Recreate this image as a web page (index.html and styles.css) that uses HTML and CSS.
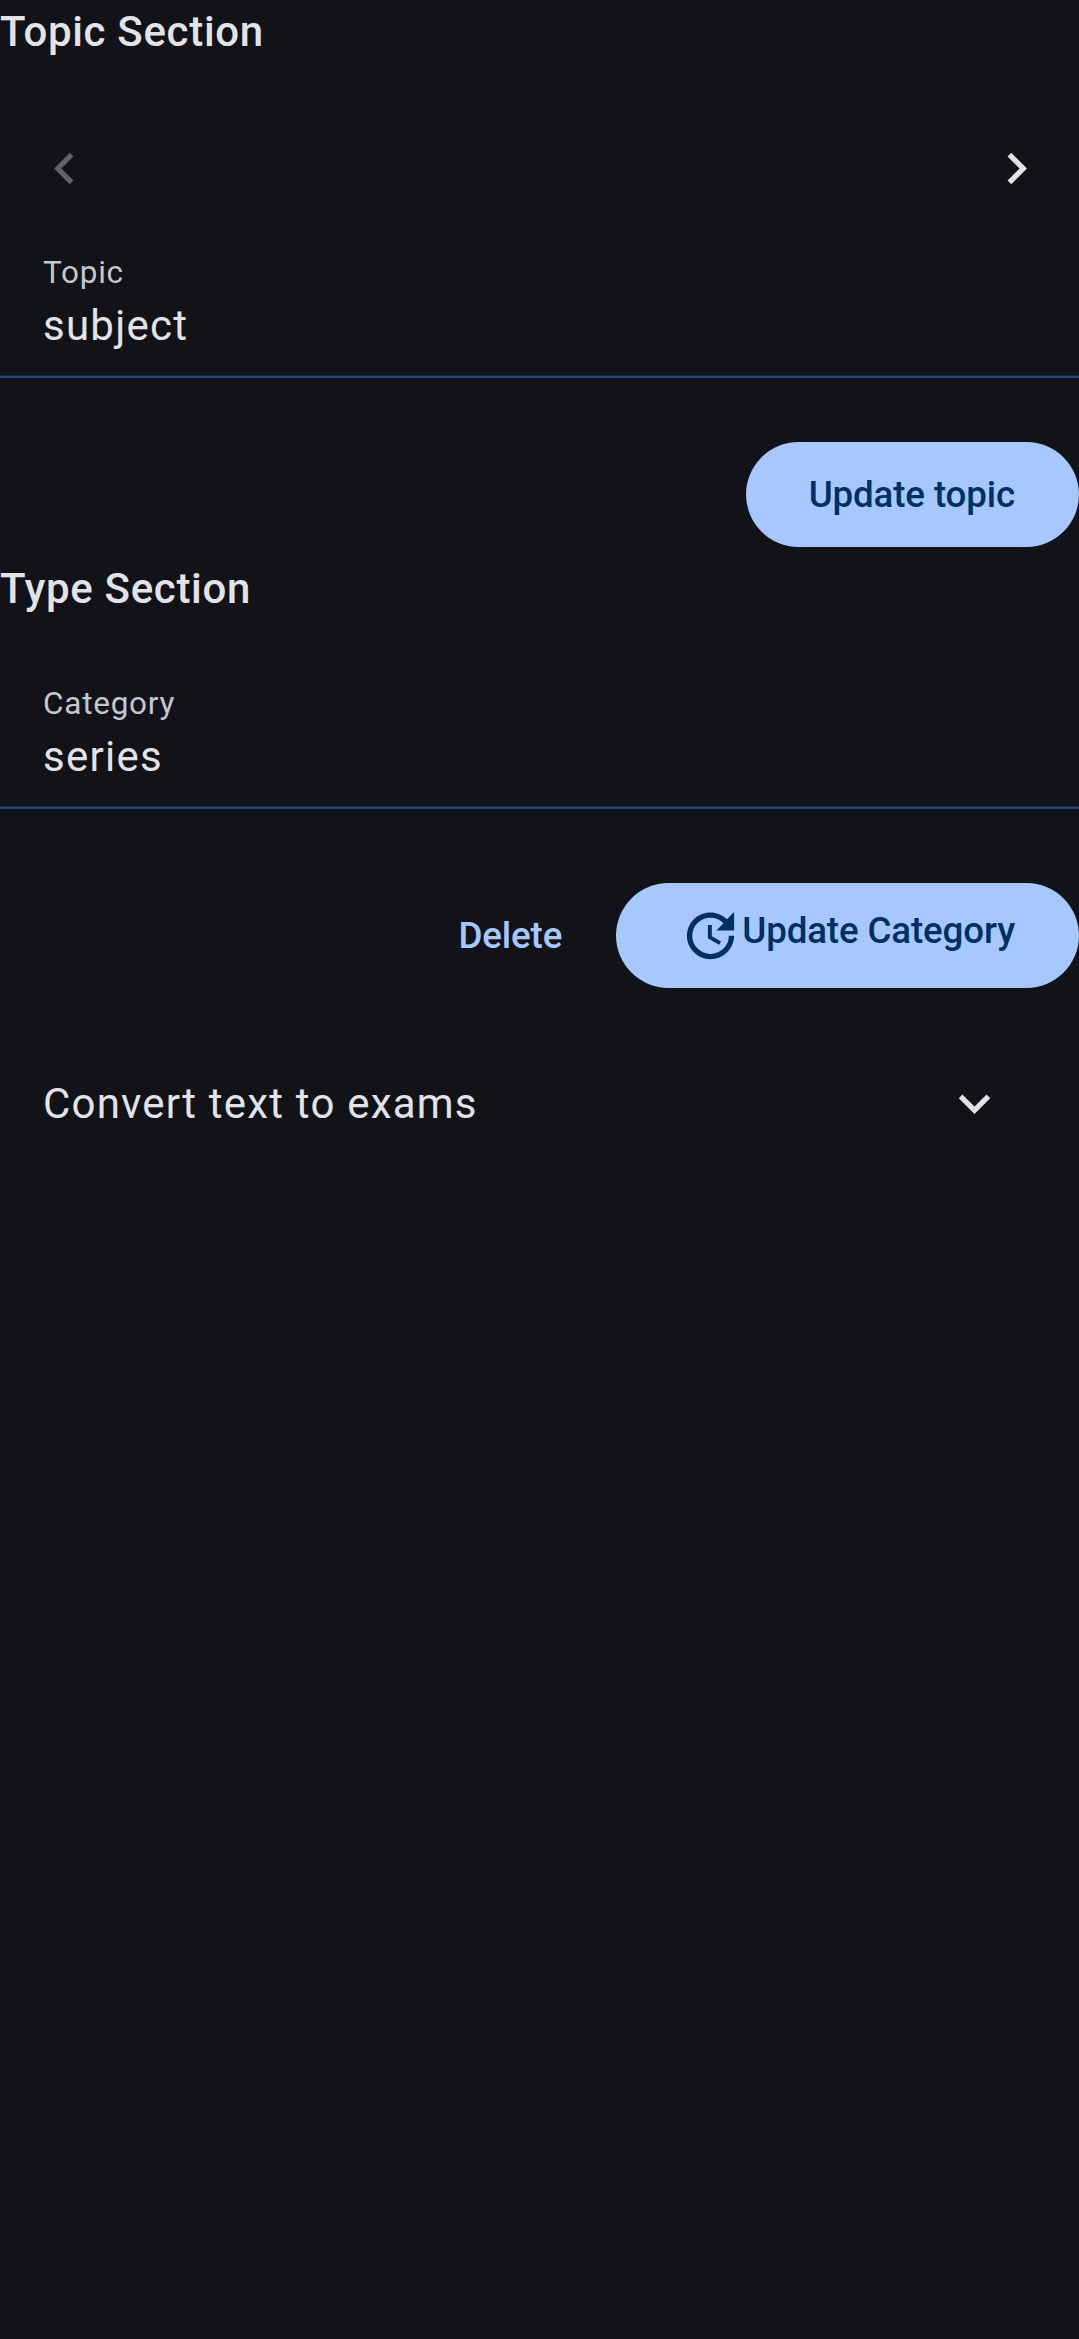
FILE: index.html
```html
<!DOCTYPE html>
<html lang="en">
<head>
<meta charset="utf-8">
<title>Topic editor</title>
<link rel="stylesheet" href="styles.css">
</head>
<body>
<main class="screen">
  <h2 class="section-title">Topic Section</h2>
  <nav class="pager">
    <button class="icon-button" disabled aria-label="Previous">
      <svg class="icon" viewBox="0 0 24 24"><path d="M15.41 7.41 14 6l-6 6 6 6 1.41-1.41L10.83 12z"/></svg>
    </button>
    <button class="icon-button" aria-label="Next">
      <svg class="icon" viewBox="0 0 24 24"><path d="M10 6 8.59 7.41 13.17 12l-4.58 4.59L10 18l6-6z"/></svg>
    </button>
  </nav>
  <div class="field">
    <span class="field-label">Topic</span>
    <span class="field-value">subject</span>
  </div>
  <div class="actions actions-topic">
    <button class="button filled"><span>Update topic</span></button>
  </div>
  <h2 class="section-title">Type Section</h2>
  <div class="field field-category">
    <span class="field-label">Category</span>
    <span class="field-value">series</span>
  </div>
  <div class="actions actions-category">
    <button class="button text"><span>Delete</span></button>
    <button class="button filled with-icon">
      <svg class="icon" viewBox="0 0 24 24"><path d="M21 10.12h-6.78l2.74-2.82c-2.73-2.7-7.15-2.8-9.88-.1-2.73 2.71-2.73 7.08 0 9.79s7.15 2.71 9.88 0C18.32 15.65 19 14.08 19 12.1h2c0 1.98-.88 4.55-2.64 6.29-3.51 3.48-9.21 3.48-12.72 0-3.5-3.47-3.53-9.11-.02-12.58s9.14-3.47 12.65 0L21 3v7.12zM12.5 8v4.25l3.5 2.08-.72 1.21L11 13V8h1.5z"/></svg>
      <span>Update Category</span>
    </button>
  </div>
  <div class="expander">
    <span>Convert text to exams</span>
    <svg class="icon" viewBox="0 0 24 24"><path d="M7.41 8.59 12 13.17l4.59-4.58L18 10l-6 6-6-6z"/></svg>
  </div>
</main>
</body>
</html>
```

FILE: styles.css
```css
* {
  box-sizing: border-box;
}

body {
  margin: 0;
  background: #111318;
  color: #e2e2e9;
  font-family: Roboto, sans-serif;
}

.screen {
  display: flex;
  flex-direction: column;
  min-height: 2339px;
}

.section-title {
  margin: 0;
  font-size: 42px;
  font-weight: 500;
  line-height: 63px;
  letter-spacing: 0.68px;
}

.icon {
  display: block;
  flex: none;
  width: 63px;
  height: 63px;
  fill: currentColor;
}

.pager {
  display: flex;
  justify-content: space-between;
  margin-top: 42px;
  padding-left: 1px;
}

.icon-button {
  display: grid;
  place-items: center;
  width: 126px;
  height: 126px;
  padding: 0;
  border: 0;
  background: none;
  color: inherit;
}

.icon-button:disabled {
  opacity: 0.38;
}

.field {
  display: flex;
  flex-direction: column;
  height: 147px;
  padding: 21px 43px 0;
  background: linear-gradient(#1a2a42 1px, #23477a 1px) bottom / 100% 3px no-repeat;
}

.field-category {
  margin-top: 42px;
}

.field-label {
  margin-bottom: 1px;
  color: #c4c6d0;
  font-size: 31.5px;
  line-height: 41px;
  letter-spacing: 0.75px;
}

.field-value {
  font-size: 42px;
  line-height: 63px;
  letter-spacing: 1.25px;
}

.actions {
  display: flex;
  justify-content: flex-end;
}

.actions-topic {
  margin: 64px 0 10px;
}

.actions-category {
  gap: 22px;
  margin-top: 74px;
}

.button {
  display: flex;
  align-items: center;
  height: 105px;
  padding: 0 64px 0 63px;
  border: 0;
  border-radius: 53px;
  font-family: inherit;
  font-size: 36.75px;
  font-weight: 500;
  line-height: 52.5px;
  letter-spacing: -0.15px;
}

.button span {
  padding-top: 1px;
}

.filled {
  background: #a7c8ff;
  color: #003062;
}

.text {
  padding: 0 32px 0 31px;
  background: none;
  color: #a7c8ff;
}

.with-icon {
  align-items: flex-start;
  padding-top: 21px;
}

.expander {
  display: flex;
  align-items: center;
  justify-content: space-between;
  margin-top: 84px;
  padding: 0 73px 0 43px;
  font-size: 42px;
  line-height: 63px;
  letter-spacing: 1.2px;
}
```
